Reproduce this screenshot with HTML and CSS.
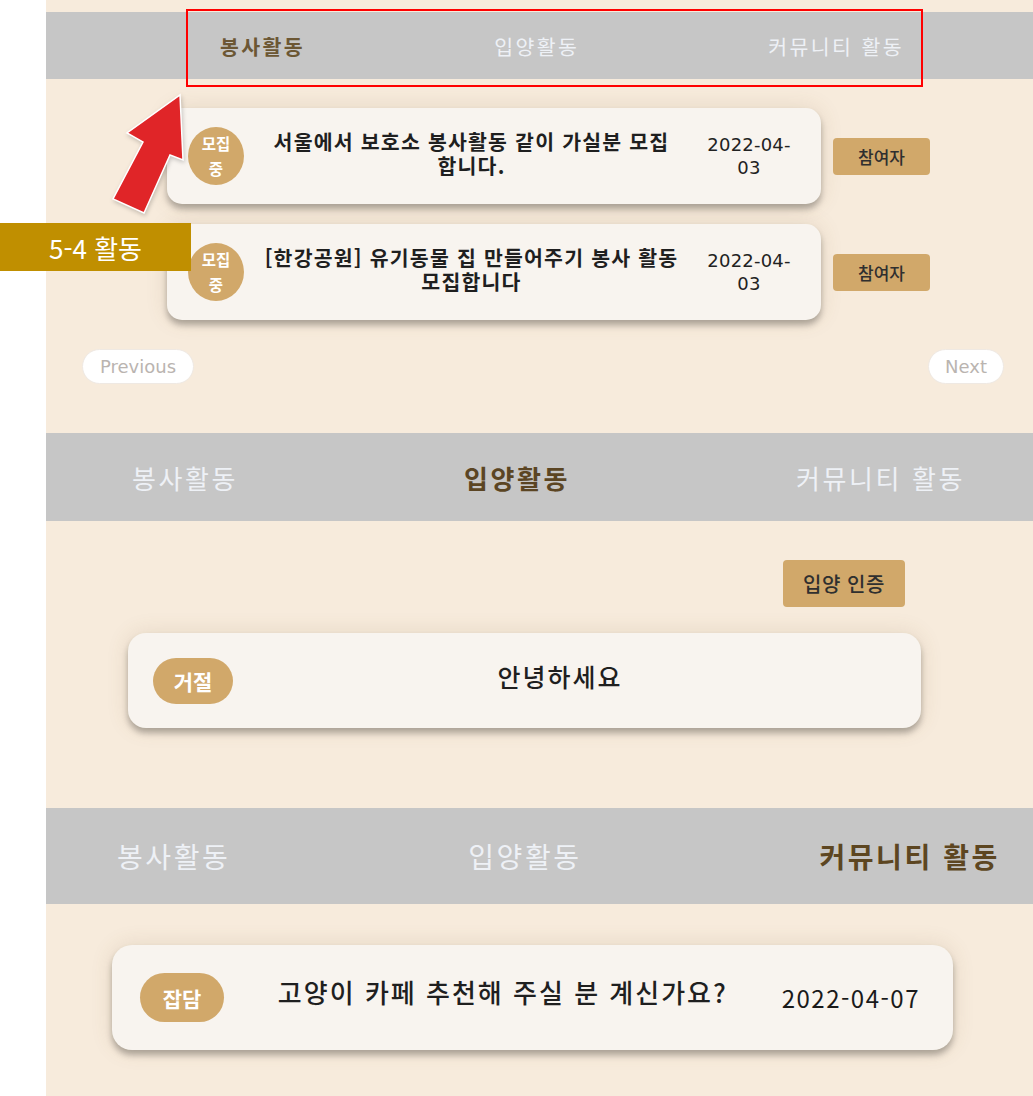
FILE: index.html
```html
<!DOCTYPE html>
<html lang="ko">
<head>
<meta charset="utf-8">
<title>활동</title>
<link rel="stylesheet" href="styles.css">
</head>
<body>
<div class="page">
  <section class="panel panel-1">
    <nav class="tabs tabs-1">
      <span class="tab active">봉사활동</span>
      <span class="tab">입양활동</span>
      <span class="tab">커뮤니티 활동</span>
    </nav>
    <div class="list">
      <div class="row">
        <div class="card card-vol">
          <div class="badge badge-round">모집<br>중</div>
          <div class="title">서울에서 보호소 봉사활동 같이 가실분 모집 합니다.</div>
          <div class="date">2022-04-<br>03</div>
        </div>
        <button class="btn btn-join">참여자</button>
      </div>
      <div class="row">
        <div class="card card-vol">
          <div class="badge badge-round">모집<br>중</div>
          <div class="title">[한강공원] 유기동물 집 만들어주기 봉사 활동 모집합니다</div>
          <div class="date">2022-04-<br>03</div>
        </div>
        <button class="btn btn-join">참여자</button>
      </div>
    </div>
    <div class="pager">
      <button class="page-btn prev">Previous</button>
      <button class="page-btn next">Next</button>
    </div>
  </section>

  <section class="panel panel-2">
    <nav class="tabs tabs-2">
      <span class="tab">봉사활동</span>
      <span class="tab active">입양활동</span>
      <span class="tab">커뮤니티 활동</span>
    </nav>
    <div class="actions">
      <button class="btn btn-cert">입양 인증</button>
    </div>
    <div class="card card-adopt">
      <div class="badge badge-pill">거절</div>
      <div class="title title-adopt">안녕하세요</div>
    </div>
  </section>

  <section class="panel panel-3">
    <nav class="tabs tabs-3">
      <span class="tab">봉사활동</span>
      <span class="tab">입양활동</span>
      <span class="tab active">커뮤니티 활동</span>
    </nav>
    <div class="card card-comm">
      <div class="badge badge-pill badge-lg">잡담</div>
      <div class="title title-comm">고양이 카페 추천해 주실 분 계신가요?</div>
      <div class="date date-comm">2022-04-07</div>
    </div>
  </section>
</div>

<div class="annot-rect"></div>
<svg class="annot-arrow" width="90" height="130" viewBox="100 90 90 130" aria-hidden="true">
  <polygon points="180,95 183,160 170,155 144,213 113,199 143,142 127,133" fill="#e02528" stroke="#ffffff" stroke-width="1.5" stroke-linejoin="miter"/>
</svg>
<div class="annot-label">5-4 활동</div>
</body>
</html>
```

FILE: styles.css
```css
* { box-sizing: border-box; }

html, body {
  margin: 0;
  padding: 0;
  background: #ffffff;
}

body {
  font-family: "Noto Sans CJK KR", "Noto Sans", sans-serif;
  position: relative;
  width: 1033px;
  height: 1096px;
  overflow: hidden;
}

.page {
  margin-left: 46px;
  width: 987px;
  background: #f7ebdc;
}

.panel {
  display: flex;
  flex-direction: column;
}

/* tabs */
.tabs {
  display: flex;
  justify-content: space-between;
  align-items: center;
  background: #c6c6c6;
}
.tab {
  color: #eef1f6;
  white-space: nowrap;
}
.tab.active { font-weight: 700; }

.panel-1 { padding-top: 12px; height: 433px; }
.tabs-1 {
  height: 67px;
  padding: 0 129px 0 174px;
  font-size: 20.5px;
  letter-spacing: 2.4px;
}
.tabs-1 .tab.active { color: #6c5734; }

.tabs-2 {
  height: 88px;
  padding: 0 68px 0 86px;
  font-size: 26px;
  letter-spacing: 2.6px;
}
.tabs-2 .tab.active { color: #5b4523; }

.tabs-3 {
  height: 96px;
  padding: 0 33px 0 71px;
  font-size: 28px;
  letter-spacing: 2.6px;
}
.tabs-3 .tab.active { color: #5d4621; }

/* cards */
.list {
  margin-top: 29px;
  display: flex;
  flex-direction: column;
  gap: 20px;
}
.row {
  display: flex;
  align-items: center;
  gap: 12px;
  margin-left: 121px;
}
.card {
  display: flex;
  align-items: center;
  background: #f8f4ef;
  box-shadow: 0 5px 6px rgba(0, 0, 0, 0.28), 0 0 22px rgba(120, 90, 50, 0.14);
}
.card-vol {
  width: 654px;
  height: 96px;
  border-radius: 15px;
  padding-left: 21px;
  padding-right: 22px;
}

.badge {
  flex: none;
  display: flex;
  align-items: center;
  justify-content: center;
  background: #d1a86a;
  color: #ffffff;
  font-weight: 700;
  text-align: center;
}
.badge-round {
  width: 56px;
  height: 58px;
  border-radius: 50%;
  font-size: 15.5px;
  line-height: 25px;
}
.badge-pill {
  width: 80px;
  height: 46px;
  border-radius: 23px;
  font-size: 21px;
}
.badge-lg {
  width: 84px;
  height: 49px;
  border-radius: 25px;
  font-size: 21px;
}

.title {
  flex: 1;
  text-align: center;
  color: #1f1f1f;
  font-weight: 700;
  word-break: keep-all;
}
.card-vol .title {
  font-size: 20.5px;
  letter-spacing: 1.2px;
  line-height: 24px;
  padding: 0 10px 6px;
}
.date {
  flex: none;
  width: 100px;
  text-align: center;
  font-family: "DejaVu Sans", sans-serif;
  font-size: 18px;
  letter-spacing: 0.2px;
  line-height: 23px;
  color: #222222;
}

.btn {
  border: 0;
  border-radius: 4px;
  background: #d1a86a;
  color: #2f2f2f;
  font-family: "Noto Sans CJK KR", sans-serif;
  padding: 0;
}
.btn-join {
  width: 97px;
  height: 37px;
  font-size: 17px;
  font-weight: 500;
}

/* pager */
.pager {
  margin-top: 29px;
  display: flex;
  justify-content: space-between;
  padding: 0 29px 0 36px;
}
.page-btn {
  height: 35px;
  border: 1px solid #efe9e3;
  border-radius: 18px;
  background: #ffffff;
  color: #bab4b0;
  font-family: "DejaVu Sans", sans-serif;
  font-size: 18px;
  padding: 0;
}
.prev { width: 112px; }
.next { width: 76px; }

/* panel 2 */
.panel-2 { height: 375px; }
.actions {
  display: flex;
  justify-content: flex-end;
  padding-right: 128px;
  margin-top: 39px;
}
.btn-cert {
  width: 122px;
  height: 47px;
  font-size: 20px;
  letter-spacing: 0.6px;
  font-weight: 500;
}
.card-adopt {
  margin-top: 26px;
  margin-left: 82px;
  width: 793px;
  height: 95px;
  border-radius: 18px;
  padding-left: 25px;
  padding-right: 34px;
}
.title-adopt {
  font-size: 25px;
  font-weight: 500;
  letter-spacing: 2px;
  padding-bottom: 10px;
}

/* panel 3 */
.panel-3 { height: 288px; }
.card-comm {
  margin-top: 41px;
  margin-left: 66px;
  width: 841px;
  height: 105px;
  border-radius: 20px;
  padding-left: 28px;
  padding-right: 33px;
}
.title-comm {
  font-size: 26px;
  font-weight: 500;
  letter-spacing: 2px;
  padding-bottom: 12px;
}
.date-comm {
  width: auto;
  font-family: "Noto Sans CJK KR", sans-serif;
  font-size: 24px;
  letter-spacing: 1.5px;
  color: #1a1a1a;
}

/* annotations overlay */
.annot-rect {
  position: absolute;
  left: 186px;
  top: 9px;
  width: 737px;
  height: 78px;
  border: 2px solid #ff0000;
}
.annot-arrow {
  position: absolute;
  left: 100px;
  top: 90px;
  filter: drop-shadow(1px 2px 2px rgba(0,0,0,0.2));
}
.annot-label {
  position: absolute;
  left: 0;
  top: 223px;
  width: 191px;
  height: 48px;
  background: #c08f00;
  color: #ffffff;
  font-size: 26px;
  display: flex;
  align-items: center;
  justify-content: center;
}
```
